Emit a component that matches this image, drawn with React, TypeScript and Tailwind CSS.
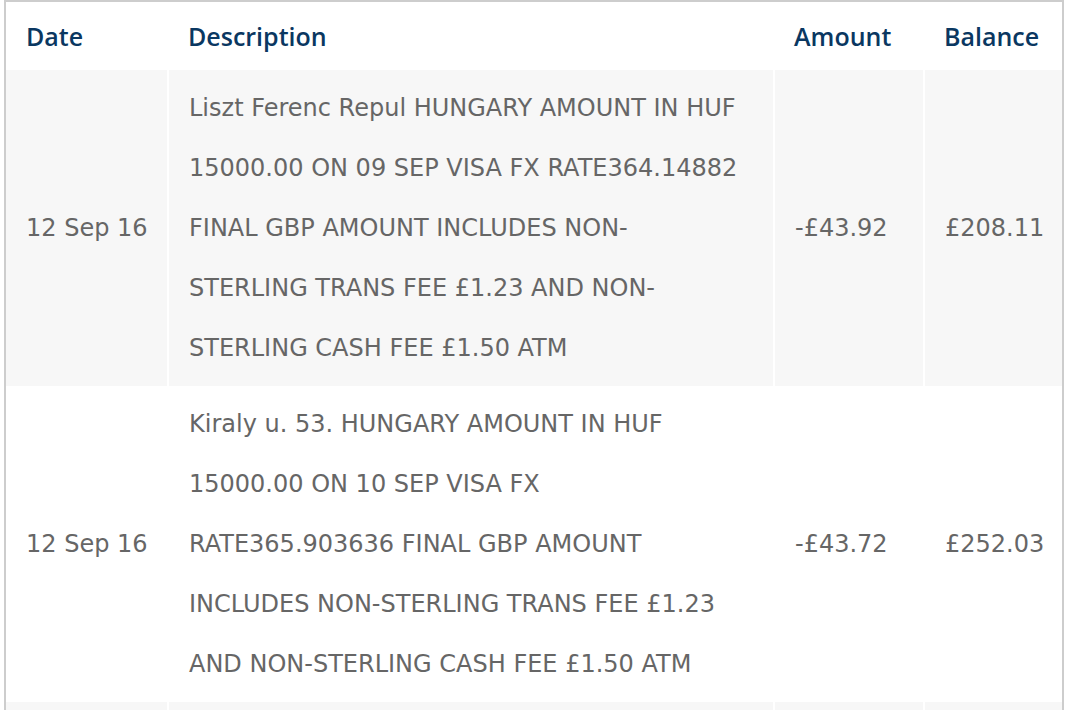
const rows = [
  {
    date: '12 Sep 16',
    lines: [
      'Liszt Ferenc Repul HUNGARY AMOUNT IN HUF',
      '15000.00 ON 09 SEP VISA FX RATE364.14882',
      'FINAL GBP AMOUNT INCLUDES NON-',
      'STERLING TRANS FEE £1.23 AND NON-',
      'STERLING CASH FEE £1.50 ATM',
    ],
    amount: '-£43.92',
    balance: '£208.11',
  },
  {
    date: '12 Sep 16',
    lines: [
      'Kiraly u. 53. HUNGARY AMOUNT IN HUF',
      '15000.00 ON 10 SEP VISA FX',
      'RATE365.903636 FINAL GBP AMOUNT',
      'INCLUDES NON-STERLING TRANS FEE £1.23',
      'AND NON-STERLING CASH FEE £1.50 ATM',
    ],
    amount: '-£43.72',
    balance: '£252.03',
  },
];

const headCell =
  "text-left font-semibold text-[25px] leading-[36px] text-[#0a3761] pl-[20px] pt-4 pb-4 font-['Open_Sans',sans-serif]";

export default function App() {
  return (
    <div className="h-[710px] overflow-hidden bg-white px-[4px]">
      <div className="border-2 border-b-0 border-[#cdcdcd]">
        <table className="w-full table-fixed border-collapse font-['DejaVu_Sans',Verdana,sans-serif] text-[24px] leading-[60px] text-[#666]">
          <colgroup>
            <col className="w-[162px]" />
            <col className="w-[606px]" />
            <col className="w-[150px]" />
            <col />
          </colgroup>
          <thead>
            <tr>
              <th className={headCell}>Date</th>
              <th className={headCell}>Description</th>
              <th className={headCell}>Amount</th>
              <th className={headCell}>Balance</th>
            </tr>
          </thead>
          <tbody>
            {rows.map((r, i) => (
              <tr key={i} className={i % 2 === 0 ? 'bg-[#f7f7f7]' : 'bg-white'}>
                <td className="border-r-2 border-white pl-[20px] align-middle whitespace-nowrap">{r.date}</td>
                <td className="border-r-2 border-white pl-[20px] py-2 align-middle">
                  {r.lines.map((l, j) => (
                    <span key={j} className="block whitespace-nowrap">
                      {l}
                    </span>
                  ))}
                </td>
                <td className="border-r-2 border-white pl-[20px] align-middle">{r.amount}</td>
                <td className="pl-[20px] align-middle">{r.balance}</td>
              </tr>
            ))}
            {/* next row, only its top edge is on screen */}
            <tr className="bg-[#f7f7f7]">
              <td className="border-r-2 border-white h-[60px]" />
              <td className="border-r-2 border-white" />
              <td className="border-r-2 border-white" />
              <td />
            </tr>
          </tbody>
        </table>
      </div>
    </div>
  );
}
